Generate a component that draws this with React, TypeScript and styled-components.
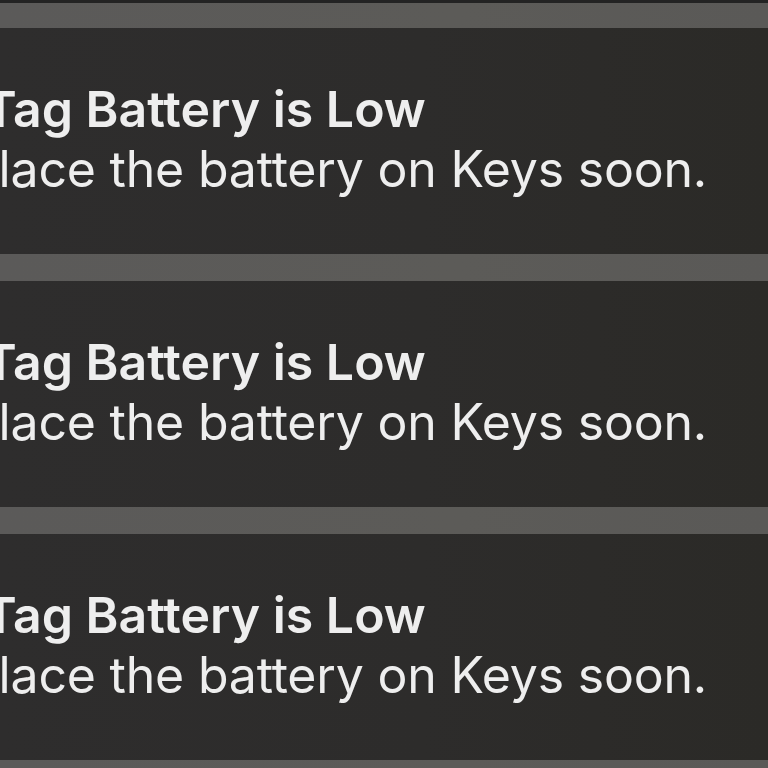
import styled, { createGlobalStyle } from "styled-components";

const GlobalStyle = createGlobalStyle`
	html, body {
		margin: 0;
		padding: 0;
		background: #5a5958;
		overflow: hidden;
	}
`;

type Notice = {
	title: string;
	body: string;
};

const notices: Notice[] = [
	{ title: "AirTag Battery is Low", body: "Replace the battery on Keys soon." },
	{ title: "AirTag Battery is Low", body: "Replace the battery on Keys soon." },
	{ title: "AirTag Battery is Low", body: "Replace the battery on Keys soon." },
];

export default function App() {
	return (
		<>
			<GlobalStyle />
			<Page>
				{notices.map((n, i) => (
					<Card key={i}>
						<Text>
							<Title>{n.title}</Title>
							<Body>{n.body}</Body>
						</Text>
					</Card>
				))}
			</Page>
		</>
	);
}

const Page = styled.div`
	width: 768px;
	height: 768px;
	box-sizing: border-box;
	border-top: 3px solid #232323;
	padding-top: 25px;
	display: flex;
	flex-direction: column;
	gap: 27px;
	background: linear-gradient(90deg, #5b5a59 0%, #5c5b58 60%, #5a5957 100%);
	overflow: hidden;
`;

const Card = styled.div`
	height: 226px;
	flex-shrink: 0;
	box-sizing: border-box;
	padding-bottom: 5px;
	background: linear-gradient(90deg, #2e2d2d 0%, #2d2c2b 55%, #2b2a27 100%);
	display: flex;
	align-items: center;
	overflow: hidden;
`;

const Text = styled.div`
	margin-left: -92px;
	font-family: Inter, "Open Sans", sans-serif;
	color: #eeeeee;
	font-size: 50px;
	line-height: 60px;
	white-space: nowrap;
`;

const Title = styled.div`
	font-weight: 600;
	margin-left: 9px;
`;

const Body = styled.div`
	font-weight: 400;
	letter-spacing: -0.2px;
`;
